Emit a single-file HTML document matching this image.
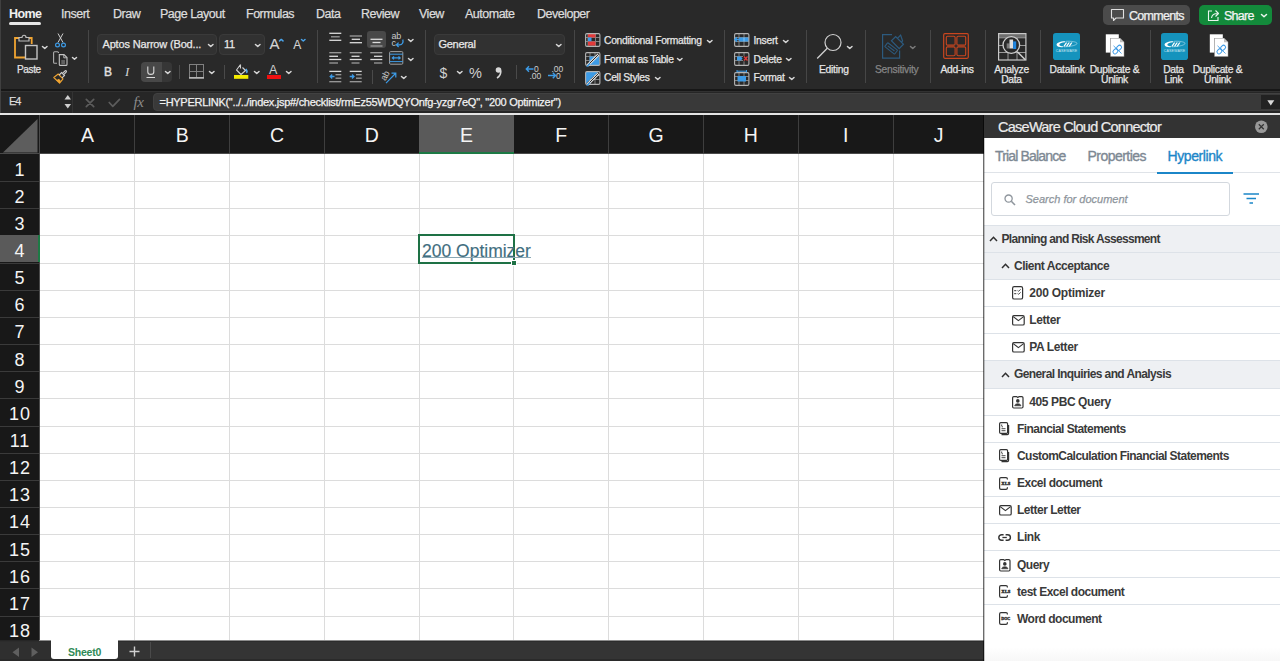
<!DOCTYPE html><html><head><meta charset="utf-8"><style>
*{box-sizing:border-box;margin:0;padding:0}
html,body{width:1280px;height:661px;overflow:hidden;background:#292929;font-family:"Liberation Sans",sans-serif}
.a{position:absolute;white-space:nowrap}
svg{position:absolute;overflow:visible}
.tab{position:absolute;top:8px;font-size:12.5px;color:#dcdcdc;letter-spacing:-0.5px;line-height:12px;-webkit-text-stroke:0.25px #dcdcdc}
.sep{position:absolute;width:1px;background:#474747}
.lbl{position:absolute;font-size:10.5px;color:#e6e6e6;letter-spacing:-0.3px;line-height:10px;text-align:center;white-space:nowrap}
.btxt{position:absolute;font-size:10.5px;color:#e6e6e6;letter-spacing:-0.3px;line-height:10px;white-space:nowrap}
.chev{position:absolute}
.ch{position:absolute;top:0;height:39px;background:#181818;color:#f4f4f4;font-size:19px;text-align:center;line-height:40px}
.rh{position:absolute;left:0;width:39px;height:27px;background:#181818;color:#f4f4f4;font-size:18px;text-align:center;line-height:29px}
.row{position:absolute;left:0;width:297px;height:27px;border-top:1px solid #e1e5ea;font-size:12px;font-weight:bold;color:#333;letter-spacing:-0.55px}
.row.g{background:#eef0f3}
.row span{position:absolute;top:7px;line-height:12px}
</style></head><body>
<div class="a" style="left:0;top:0;width:1280px;height:89px;background:#292929"></div>
<div class="tab" style="left:9px;font-weight:bold;color:#f0f0f0;letter-spacing:-0.6px;-webkit-text-stroke:0">Home</div>
<div class="tab" style="left:61px;">Insert</div>
<div class="tab" style="left:113px;">Draw</div>
<div class="tab" style="left:160px;">Page Layout</div>
<div class="tab" style="left:246px;">Formulas</div>
<div class="tab" style="left:316px;">Data</div>
<div class="tab" style="left:361px;">Review</div>
<div class="tab" style="left:419px;">View</div>
<div class="tab" style="left:465px;">Automate</div>
<div class="tab" style="left:537px;">Developer</div>
<div class="a" style="left:9px;top:22px;width:32px;height:3px;border-radius:2px;background:#e6e6e6"></div>
<div class="a" style="left:1103px;top:5px;width:87px;height:20px;border-radius:5px;background:#4b4b4b"></div>
<svg style="left:1110px;top:8px" width="15" height="14"><path d="M1.5 1.5 H13.5 V10 H6 L3.5 12.5 V10 H1.5 Z" fill="none" stroke="#e0e0e0" stroke-width="1.1" stroke-linejoin="round"/></svg>
<div class="a" style="left:1129px;top:9.5px;font-size:12.5px;line-height:12px;color:#f0f0f0;letter-spacing:-0.72px;-webkit-text-stroke:0.25px #f0f0f0">Comments</div>
<div class="a" style="left:1199px;top:5px;width:73px;height:20px;border-radius:5px;background:#138a3b"></div>
<svg style="left:1207px;top:9px" width="14" height="13"><path d="M5 2 H1.5 V11.5 H11 V8" fill="none" stroke="#eaf5ee" stroke-width="1.1"/><path d="M4.5 9 C5 5.5 7.5 4.5 10.5 4.5 M8.5 1.5 L11.5 4.5 L8.5 7.5" fill="none" stroke="#eaf5ee" stroke-width="1.1" stroke-linejoin="round"/></svg>
<div class="a" style="left:1224px;top:9.5px;font-size:12.5px;line-height:12px;color:#f4f4f4;letter-spacing:-0.75px;-webkit-text-stroke:0.25px #f4f4f4">Share</div>
<svg style="left:1260.5px;top:13.5px" width="6" height="3.3000000000000003"><path d="M0.5 0.5 L3.0 2.8000000000000003 L5.5 0.5" fill="none" stroke="#eaf5ee" stroke-width="1.5" stroke-linecap="round" stroke-linejoin="round"/></svg>
<svg style="left:13px;top:33px" width="27" height="28"><path d="M8 5 H2 V24.5 H12" fill="none" stroke="#f0a431" stroke-width="1.8"/><path d="M14 5 H18.7 V11" fill="none" stroke="#f0a431" stroke-width="1.8"/><path d="M6 8 V4.5 H9 C9 1.5 13 1.5 13 4.5 H16 V8 Z" fill="#292929" stroke="#bdbdbd" stroke-width="1.2"/><rect x="12.5" y="12.5" width="11.5" height="13.5" fill="#292929" stroke="#c4c4c4" stroke-width="1.4"/></svg>
<svg style="left:42px;top:46px" width="5.5" height="3.0250000000000004"><path d="M0.5 0.5 L2.75 2.5250000000000004 L5.0 0.5" fill="none" stroke="#d6d6d6" stroke-width="1.5" stroke-linecap="round" stroke-linejoin="round"/></svg>
<div class="a" style="left:17px;top:65px;font-size:10px;line-height:10px;letter-spacing:-0.35px;color:#e2e2e2;-webkit-text-stroke:0.25px #e2e2e2;">Paste</div>
<svg style="left:55px;top:33px" width="11" height="15"><path d="M3 9.5 L8 0.5 M8 9.5 L3 0.5" fill="none" stroke="#cfcfcf" stroke-width="1"/><circle cx="2.5" cy="12" r="1.9" fill="none" stroke="#3d9be6" stroke-width="1.2"/><circle cx="8.5" cy="12" r="1.9" fill="none" stroke="#3d9be6" stroke-width="1.2"/></svg>
<svg style="left:53px;top:51px" width="15" height="16"><path d="M5.5 2 V1.8 C5.5 1.2 5 0.7 4.4 0.7 H1.6 C1 0.7 0.6 1.2 0.6 1.8 V11.2 C0.6 11.8 1 12.3 1.6 12.3 H4" fill="none" stroke="#b0b0b0" stroke-width="1.1"/><path d="M6.3 3.6 H11 L14 6.6 V13.4 C14 14 13.6 14.4 13 14.4 H7.3 C6.7 14.4 6.3 14 6.3 13.4 Z" fill="none" stroke="#c4c4c4" stroke-width="1.1"/><path d="M10.8 3.8 V6.8 H13.8" fill="none" stroke="#c4c4c4" stroke-width="0.9"/><path d="M8.3 10 H12 M8.3 12 H12" stroke="#a8a8a8" stroke-width="0.9"/></svg>
<svg style="left:72px;top:57px" width="5" height="2.75"><path d="M0.5 0.5 L2.5 2.25 L4.5 0.5" fill="none" stroke="#d6d6d6" stroke-width="1.5" stroke-linecap="round" stroke-linejoin="round"/></svg>
<svg style="left:53px;top:70px" width="15" height="14"><path d="M0.8 7.5 L5.2 4 L10 8.8 L6.6 13.2 Z" fill="none" stroke="#f0a431" stroke-width="1.1" stroke-linejoin="round"/><path d="M3.2 10.2 L6 8.7 L7.8 11 L6.6 13.2 Z" fill="#f0a431"/><path d="M6.2 5 L8.6 2.6 L11.5 5.5 L9 7.9" fill="none" stroke="#cfcfcf" stroke-width="1.1"/><path d="M9.6 3.2 L12.3 0.8 C13 0.3 13.9 1.1 13.4 1.8 L11 4.4" fill="none" stroke="#cfcfcf" stroke-width="1.1"/></svg>
<div class="sep" style="left:88px;top:30px;height:53px;background:#464646"></div>
<div class="a" style="left:97px;top:34px;width:120px;height:21px;border-radius:4px;background:#313131;border:1px solid #3a3a3a"></div>
<div class="a" style="left:102.5px;top:39px;font-size:11px;line-height:11px;letter-spacing:-0.17px;color:#e8e8e8;-webkit-text-stroke:0.25px #e8e8e8;">Aptos Narrow (Bod...</div>
<svg style="left:208px;top:43.5px" width="5.5" height="3.0250000000000004"><path d="M0.5 0.5 L2.75 2.5250000000000004 L5.0 0.5" fill="none" stroke="#d6d6d6" stroke-width="1.5" stroke-linecap="round" stroke-linejoin="round"/></svg>
<div class="a" style="left:218.5px;top:34px;width:46px;height:21px;border-radius:4px;background:#313131;border:1px solid #3a3a3a"></div>
<div class="a" style="left:224px;top:39px;font-size:11px;line-height:11px;letter-spacing:-0.2px;color:#e8e8e8;-webkit-text-stroke:0.25px #e8e8e8;">11</div>
<svg style="left:255px;top:43.5px" width="5.5" height="3.0250000000000004"><path d="M0.5 0.5 L2.75 2.5250000000000004 L5.0 0.5" fill="none" stroke="#d6d6d6" stroke-width="1.5" stroke-linecap="round" stroke-linejoin="round"/></svg>
<div class="a" style="left:269.6px;top:36.3px;font-size:15px;line-height:15px;letter-spacing:0px;color:#d4d4d4;-webkit-text-stroke:0.1px #d4d4d4;">A</div>
<svg style="left:278.8px;top:39.3px" width="4.5" height="2.475"><path d="M0.5 0.5 L2.25 1.975 L4.0 0.5" fill="none" transform="rotate(180 2.25 1.2)" stroke="#4aa3e8" stroke-width="1.5" stroke-linecap="round" stroke-linejoin="round"/></svg>
<div class="a" style="left:293.3px;top:39px;font-size:12px;line-height:12px;letter-spacing:0px;color:#d4d4d4;-webkit-text-stroke:0.1px #d4d4d4;">A</div>
<svg style="left:300.5px;top:38.5px" width="4.5" height="2.475"><path d="M0.5 0.5 L2.25 1.975 L4.0 0.5" fill="none" stroke="#4aa3e8" stroke-width="1.5" stroke-linecap="round" stroke-linejoin="round"/></svg>
<div class="a" style="left:104px;top:66px;font-size:12px;line-height:12px;letter-spacing:0px;color:#dedede;-webkit-text-stroke:0.5px #dedede;">B</div>
<div class="a" style="left:125px;top:65px;font-family:'Liberation Serif',serif;font-style:italic;font-size:13px;line-height:13px;color:#d4d4d4">I</div>
<div class="a" style="left:141px;top:62px;width:21px;height:20px;border-radius:4px 0 0 4px;background:#484848"></div>
<div class="a" style="left:162px;top:62px;width:10px;height:20px;border-radius:0 4px 4px 0;background:#363636"></div>
<svg style="left:146px;top:66px" width="10" height="13"><path d="M1.8 0.5 V6 C1.8 9.2 7.8 9.2 7.8 6 V0.5" fill="none" stroke="#dadada" stroke-width="1.1"/><path d="M0.5 11.5 H9" stroke="#dadada" stroke-width="1"/></svg>
<svg style="left:164.5px;top:70.5px" width="5.5" height="3.0250000000000004"><path d="M0.5 0.5 L2.75 2.5250000000000004 L5.0 0.5" fill="none" stroke="#d6d6d6" stroke-width="1.5" stroke-linecap="round" stroke-linejoin="round"/></svg>
<div class="sep" style="left:179px;top:65px;height:14px;background:#4a4a4a"></div>
<svg style="left:189px;top:64px" width="15" height="15"><g fill="none" stroke="#808080" stroke-width="1"><rect x="0.5" y="0.5" width="14" height="13"/><path d="M7.5 0.5 V13 M0.5 7.5 H14.5"/></g><path d="M0 14 H15" stroke="#d8d8d8" stroke-width="1.2"/></svg>
<svg style="left:209px;top:70.5px" width="5.5" height="3.0250000000000004"><path d="M0.5 0.5 L2.75 2.5250000000000004 L5.0 0.5" fill="none" stroke="#d6d6d6" stroke-width="1.5" stroke-linecap="round" stroke-linejoin="round"/></svg>
<div class="sep" style="left:224px;top:65px;height:14px;background:#4a4a4a"></div>
<svg style="left:233px;top:63px" width="16" height="17"><path d="M7.5 1.5 L3.5 7 L8 11.5 L12.5 7.5 L9.5 4.5 M7.5 1.5 V5.5" fill="none" stroke="#d0d0d0" stroke-width="1.1" stroke-linejoin="round"/><path d="M12.8 6 C14.3 7.8 14.3 9.3 13.3 9.8" fill="none" stroke="#5aaef0" stroke-width="1.6"/><rect x="1" y="12" width="14.3" height="3.8" fill="#f4ec00"/></svg>
<svg style="left:254px;top:70.5px" width="5.5" height="3.0250000000000004"><path d="M0.5 0.5 L2.75 2.5250000000000004 L5.0 0.5" fill="none" stroke="#d6d6d6" stroke-width="1.5" stroke-linecap="round" stroke-linejoin="round"/></svg>
<div class="a" style="left:269px;top:64px;font-size:12.5px;line-height:12.5px;letter-spacing:0px;color:#d0d0d0;">A</div>
<div class="a" style="left:266.7px;top:75px;width:14.3px;height:3.8px;background:#f01010"></div>
<svg style="left:286px;top:70.5px" width="5.5" height="3.0250000000000004"><path d="M0.5 0.5 L2.75 2.5250000000000004 L5.0 0.5" fill="none" stroke="#d6d6d6" stroke-width="1.5" stroke-linecap="round" stroke-linejoin="round"/></svg>
<div class="sep" style="left:317px;top:30px;height:53px;background:#464646"></div>
<svg style="left:329px;top:31px" width="13" height="12"><path d="M0.3 2.3 H12.3" stroke="#dcdcdc" stroke-width="1.3"/><path d="M2 5.8 H10.7" stroke="#9c9c9c" stroke-width="1.3"/><path d="M0.3 9.3 H12.3" stroke="#dcdcdc" stroke-width="1.3"/></svg>
<svg style="left:349px;top:34px" width="13" height="12"><path d="M0.7 2 H13" stroke="#9c9c9c" stroke-width="1.3"/><path d="M2.7 5.3 H11" stroke="#dcdcdc" stroke-width="1.3"/><path d="M0.7 8.7 H13" stroke="#dcdcdc" stroke-width="1.3"/></svg>
<div class="a" style="left:367px;top:31px;width:18.5px;height:16.5px;border-radius:3px;background:#484848"></div>
<svg style="left:370px;top:37px" width="13" height="12"><path d="M0.5 2.3 H12.5" stroke="#dcdcdc" stroke-width="1.3"/><path d="M2.5 5.5 H10.5" stroke="#dcdcdc" stroke-width="1.3"/><path d="M0.5 9 H12.5" stroke="#9c9c9c" stroke-width="1.3"/></svg>
<div class="a" style="left:391.5px;top:32.3px;font-size:9px;line-height:9px;letter-spacing:-0.3px;color:#c8c8c8;">ab</div>
<div class="a" style="left:391.5px;top:38.5px;font-size:9px;line-height:9px;letter-spacing:0px;color:#c8c8c8;">c</div>
<svg style="left:395px;top:38px" width="10" height="10"><path d="M7.8 1.5 C8.5 4.5 7.5 6.8 4.5 6.8 H1.6 M3.6 4.6 L1.4 6.8 L3.6 9" fill="none" stroke="#3d9be6" stroke-width="1.3"/></svg>
<svg style="left:408px;top:39px" width="5.5" height="3.0250000000000004"><path d="M0.5 0.5 L2.75 2.5250000000000004 L5.0 0.5" fill="none" stroke="#d6d6d6" stroke-width="1.5" stroke-linecap="round" stroke-linejoin="round"/></svg>
<svg style="left:329px;top:51px" width="13" height="14"><path d="M0.3 1.7 H12.3" stroke="#9c9c9c" stroke-width="1.3"/><path d="M0.3 5.3 H9" stroke="#dcdcdc" stroke-width="1.3"/><path d="M0.3 8.5 H12.3" stroke="#dcdcdc" stroke-width="1.3"/><path d="M0.3 12 H9" stroke="#9c9c9c" stroke-width="1.3"/></svg>
<svg style="left:349px;top:51px" width="13" height="14"><path d="M0.7 1.7 H12.7" stroke="#9c9c9c" stroke-width="1.3"/><path d="M2.5 5.3 H10.5" stroke="#dcdcdc" stroke-width="1.3"/><path d="M0.7 8.5 H12.7" stroke="#dcdcdc" stroke-width="1.3"/><path d="M2.5 12 H10.5" stroke="#9c9c9c" stroke-width="1.3"/></svg>
<svg style="left:369.5px;top:51px" width="13" height="14"><path d="M0.3 1.7 H12.3" stroke="#9c9c9c" stroke-width="1.3"/><path d="M4 5.3 H12.3" stroke="#dcdcdc" stroke-width="1.3"/><path d="M0.3 8.5 H12.3" stroke="#dcdcdc" stroke-width="1.3"/><path d="M4 12 H12.3" stroke="#9c9c9c" stroke-width="1.3"/></svg>
<svg style="left:389px;top:51px" width="15" height="14"><rect x="0.6" y="0.6" width="13.2" height="12.6" rx="1" fill="none" stroke="#a0a0a0" stroke-width="1"/><path d="M0.6 3.2 H13.8 M0.6 10.6 H13.8" stroke="#3d9be6" stroke-width="1"/><path d="M3.5 6.9 H11 M5 5.4 L3.3 6.9 L5 8.4 M9.5 5.4 L11.2 6.9 L9.5 8.4" fill="none" stroke="#3d9be6" stroke-width="1.2"/></svg>
<svg style="left:408px;top:57.5px" width="5.5" height="3.0250000000000004"><path d="M0.5 0.5 L2.75 2.5250000000000004 L5.0 0.5" fill="none" stroke="#d6d6d6" stroke-width="1.5" stroke-linecap="round" stroke-linejoin="round"/></svg>
<svg style="left:329px;top:70px" width="13" height="14"><path d="M0.3 1.4 H12.3" stroke="#dcdcdc" stroke-width="1.3"/><path d="M6.5 4.7 H12.3" stroke="#9c9c9c" stroke-width="1.3"/><path d="M6.5 8.2 H12.3" stroke="#9c9c9c" stroke-width="1.3"/><path d="M0.3 11.7 H12.3" stroke="#9c9c9c" stroke-width="1.3"/><path d="M5.5 6.5 H1.2 M3.2 4.5 L1.2 6.5 L3.2 8.5" fill="none" stroke="#3d9be6" stroke-width="1.3"/></svg>
<svg style="left:349px;top:70px" width="13" height="14"><path d="M0.7 1.4 H12.7" stroke="#dcdcdc" stroke-width="1.3"/><path d="M7 4.7 H12.7" stroke="#9c9c9c" stroke-width="1.3"/><path d="M7 8.2 H12.7" stroke="#9c9c9c" stroke-width="1.3"/><path d="M0.7 11.7 H12.7" stroke="#9c9c9c" stroke-width="1.3"/><path d="M0.7 6.5 H5 M3 4.5 L5 6.5 L3 8.5" fill="none" stroke="#3d9be6" stroke-width="1.3"/></svg>
<div class="sep" style="left:372px;top:70px;height:14px;background:#4a4a4a"></div>
<div class="a" style="left:381px;top:70.5px;font-size:9px;line-height:9px;color:#c8c8c8;letter-spacing:-0.3px;transform:rotate(-60deg);transform-origin:5px 5px">ab</div>
<svg style="left:385px;top:72px" width="12" height="12"><path d="M1 11.2 L10.5 1.5 M6.5 1.2 H10.8 V5.5" fill="none" stroke="#3d9be6" stroke-width="1.2"/></svg>
<svg style="left:401px;top:76px" width="5.5" height="3.0250000000000004"><path d="M0.5 0.5 L2.75 2.5250000000000004 L5.0 0.5" fill="none" stroke="#d6d6d6" stroke-width="1.5" stroke-linecap="round" stroke-linejoin="round"/></svg>
<div class="sep" style="left:425px;top:30px;height:53px;background:#464646"></div>
<div class="a" style="left:434px;top:34px;width:131px;height:21px;border-radius:4px;background:#313131;border:1px solid #3a3a3a"></div>
<div class="a" style="left:438.5px;top:39px;font-size:11px;line-height:11px;letter-spacing:-0.3px;color:#e8e8e8;-webkit-text-stroke:0.25px #e8e8e8;">General</div>
<svg style="left:556px;top:43.5px" width="5.5" height="3.0250000000000004"><path d="M0.5 0.5 L2.75 2.5250000000000004 L5.0 0.5" fill="none" stroke="#d6d6d6" stroke-width="1.5" stroke-linecap="round" stroke-linejoin="round"/></svg>
<div class="a" style="left:439.5px;top:65.5px;font-size:14px;line-height:14px;letter-spacing:0px;color:#d0d0d0;">$</div>
<svg style="left:456.5px;top:70.5px" width="5.5" height="3.0250000000000004"><path d="M0.5 0.5 L2.75 2.5250000000000004 L5.0 0.5" fill="none" stroke="#d6d6d6" stroke-width="1.5" stroke-linecap="round" stroke-linejoin="round"/></svg>
<div class="a" style="left:469px;top:65.5px;font-size:14.5px;line-height:14.5px;letter-spacing:0px;color:#d0d0d0;">%</div>
<svg style="left:494px;top:66px" width="9" height="13"><circle cx="4.5" cy="4" r="2.8" fill="#d8d8d8"/><path d="M6.8 4.5 C7 8 5.5 10.5 3 12" fill="none" stroke="#d8d8d8" stroke-width="1.6"/></svg>
<div class="sep" style="left:515.5px;top:65px;height:14px;background:#4a4a4a"></div>
<svg style="left:525px;top:65px" width="16" height="15"><text x="9" y="7" font-family="Liberation Sans" font-size="8.5" fill="#cfcfcf">0</text><text x="4.5" y="14" font-family="Liberation Sans" font-size="8.5" fill="#cfcfcf">.00</text><path d="M8.5 4 H1.3 M4 1.3 L1.3 4 L4 6.7" fill="none" stroke="#3d9be6" stroke-width="1.4"/></svg>
<svg style="left:547px;top:65px" width="16" height="15"><text x="4.5" y="7" font-family="Liberation Sans" font-size="8.5" fill="#cfcfcf">.00</text><text x="9" y="14" font-family="Liberation Sans" font-size="8.5" fill="#cfcfcf">0</text><path d="M1 10.5 H8.5 M5.8 7.8 L8.5 10.5 L5.8 13.2" fill="none" stroke="#3d9be6" stroke-width="1.4"/></svg>
<div class="sep" style="left:573.5px;top:30px;height:53px;background:#464646"></div>
<svg style="left:584.5px;top:33px" width="16" height="15"><path d="M3 0.8 V13.2 M10.5 0.8 V13.2 M0.8 4.5 H14.7 M0.8 8.5 H14.7" stroke="#8c8c8c" stroke-width="0.9"/><rect x="3" y="1" width="7.5" height="3.5" fill="#e23a3a"/><rect x="3" y="4.5" width="3.5" height="4" fill="#3d9be6"/><rect x="3" y="8.5" width="7.5" height="4.2" fill="#e23a3a"/><rect x="0.6" y="0.6" width="14.3" height="12.8" rx="1.3" fill="none" stroke="#b4b4b4" stroke-width="1.1"/></svg>
<div class="a" style="left:604px;top:35.5px;font-size:10.3px;line-height:10.3px;letter-spacing:-0.27px;color:#e6e6e6;-webkit-text-stroke:0.25px #e6e6e6;">Conditional Formatting</div>
<svg style="left:707px;top:39.5px" width="5.5" height="3.0250000000000004"><path d="M0.5 0.5 L2.75 2.5250000000000004 L5.0 0.5" fill="none" stroke="#d6d6d6" stroke-width="1.5" stroke-linecap="round" stroke-linejoin="round"/></svg>
<svg style="left:584.5px;top:52px" width="16" height="15"><path d="M5 0.8 V13.2 M10 0.8 V13.2 M0.8 4.5 H14.7 M0.8 8.5 H14.7" stroke="#8c8c8c" stroke-width="0.9"/><rect x="4.5" y="4.5" width="10" height="8.5" fill="#3d9be6"/><rect x="0.6" y="0.6" width="14.3" height="12.8" rx="1.3" fill="none" stroke="#b4b4b4" stroke-width="1.1"/><path d="M2.5 13.5 L13.5 2.5" stroke="#dadada" stroke-width="2.6"/><path d="M2.5 13.5 L13.5 2.5" stroke="#2a2a2a" stroke-width="1"/><path d="M1 14.5 L4.5 11 L5.5 12 L3 14.8 Z" fill="#3d9be6"/></svg>
<div class="a" style="left:604px;top:54.5px;font-size:10.3px;line-height:10.3px;letter-spacing:-0.27px;color:#e6e6e6;-webkit-text-stroke:0.25px #e6e6e6;">Format as Table</div>
<svg style="left:677px;top:58px" width="5.5" height="3.0250000000000004"><path d="M0.5 0.5 L2.75 2.5250000000000004 L5.0 0.5" fill="none" stroke="#d6d6d6" stroke-width="1.5" stroke-linecap="round" stroke-linejoin="round"/></svg>
<svg style="left:584.5px;top:70.5px" width="16" height="15"><path d="M5 0.8 V13.2 M10 0.8 V13.2 M0.8 4.5 H14.7 M0.8 8.5 H14.7" stroke="#8c8c8c" stroke-width="0.9"/><path d="M1 1 H13 L1 12.5 Z" fill="#3d9be6"/><rect x="0.6" y="0.6" width="14.3" height="12.8" rx="1.3" fill="none" stroke="#b4b4b4" stroke-width="1.1"/><path d="M2.5 13.5 L13.5 2.5" stroke="#dadada" stroke-width="2.6"/><path d="M2.5 13.5 L13.5 2.5" stroke="#2a2a2a" stroke-width="1"/><path d="M1 14.5 L4.5 11 L5.5 12 L3 14.8 Z" fill="#3d9be6"/></svg>
<div class="a" style="left:604px;top:73px;font-size:10.3px;line-height:10.3px;letter-spacing:-0.27px;color:#e6e6e6;-webkit-text-stroke:0.25px #e6e6e6;">Cell Styles</div>
<svg style="left:654.5px;top:76.5px" width="5.5" height="3.0250000000000004"><path d="M0.5 0.5 L2.75 2.5250000000000004 L5.0 0.5" fill="none" stroke="#d6d6d6" stroke-width="1.5" stroke-linecap="round" stroke-linejoin="round"/></svg>
<div class="sep" style="left:723.5px;top:30px;height:53px;background:#464646"></div>
<svg style="left:734px;top:33px" width="16" height="15"><path d="M5 0.8 V13.2 M10 0.8 V13.2 M0.8 4.5 H14.7 M0.8 8.5 H14.7" stroke="#8c8c8c" stroke-width="0.9"/><rect x="5" y="4.5" width="9.8" height="4" fill="#3d9be6"/><path d="M10 4.5 V8.5" stroke="#9fd0f5" stroke-width="0.8"/><rect x="0.6" y="0.6" width="14.3" height="12.8" rx="1.3" fill="none" stroke="#b4b4b4" stroke-width="1.1"/><path d="M5.5 6.5 H0.8 M3 4.3 L0.8 6.5 L3 8.7" fill="none" stroke="#3d9be6" stroke-width="1.3"/></svg>
<div class="a" style="left:753.5px;top:35.5px;font-size:10.3px;line-height:10.3px;letter-spacing:-0.27px;color:#e6e6e6;-webkit-text-stroke:0.25px #e6e6e6;">Insert</div>
<svg style="left:783px;top:39.5px" width="5.5" height="3.0250000000000004"><path d="M0.5 0.5 L2.75 2.5250000000000004 L5.0 0.5" fill="none" stroke="#d6d6d6" stroke-width="1.5" stroke-linecap="round" stroke-linejoin="round"/></svg>
<svg style="left:734px;top:52px" width="16" height="15"><path d="M5 0.8 V13.2 M10 0.8 V13.2 M0.8 4.5 H14.7 M0.8 8.5 H14.7" stroke="#8c8c8c" stroke-width="0.9"/><rect x="3" y="4.5" width="4" height="4" fill="#3d9be6"/><path d="M7 4.5 L8.5 6.5 L7 8.5 Z" fill="#3d9be6"/><rect x="9" y="3.8" width="6.5" height="5.5" fill="#292929"/><rect x="0.6" y="0.6" width="14.3" height="12.8" rx="1.3" fill="none" stroke="#b4b4b4" stroke-width="1.1"/><path d="M10 4.5 L13.5 8.5 M13.5 4.5 L10 8.5" stroke="#e23a3a" stroke-width="1.3"/></svg>
<div class="a" style="left:753.5px;top:54.5px;font-size:10.3px;line-height:10.3px;letter-spacing:-0.27px;color:#e6e6e6;-webkit-text-stroke:0.25px #e6e6e6;">Delete</div>
<svg style="left:786px;top:58px" width="5.5" height="3.0250000000000004"><path d="M0.5 0.5 L2.75 2.5250000000000004 L5.0 0.5" fill="none" stroke="#d6d6d6" stroke-width="1.5" stroke-linecap="round" stroke-linejoin="round"/></svg>
<svg style="left:734px;top:72px" width="16" height="15"><path d="M5 0.8 V13.2 M10 0.8 V13.2 M0.8 4.5 H14.7 M0.8 8.5 H14.7" stroke="#8c8c8c" stroke-width="0.9"/><rect x="3.5" y="4" width="8.5" height="5.5" fill="#3d9be6"/><rect x="0.6" y="0.6" width="14.3" height="12.8" rx="1.3" fill="none" stroke="#b4b4b4" stroke-width="1.1"/><path d="M3 -0.8 H12.5 M3 -2 V0.4 M12.5 -2 V0.4" stroke="#3d9be6" stroke-width="1"/></svg>
<div class="a" style="left:753.5px;top:73px;font-size:10.3px;line-height:10.3px;letter-spacing:-0.27px;color:#e6e6e6;-webkit-text-stroke:0.25px #e6e6e6;">Format</div>
<svg style="left:788.5px;top:76.5px" width="5.5" height="3.0250000000000004"><path d="M0.5 0.5 L2.75 2.5250000000000004 L5.0 0.5" fill="none" stroke="#d6d6d6" stroke-width="1.5" stroke-linecap="round" stroke-linejoin="round"/></svg>
<div class="sep" style="left:806px;top:30px;height:53px;background:#464646"></div>
<svg style="left:816px;top:33px" width="27" height="27"><circle cx="17" cy="9.5" r="8" fill="none" stroke="#d0d0d0" stroke-width="1.2"/><path d="M11.3 15.2 L1.2 25.5" stroke="#d0d0d0" stroke-width="1.3"/></svg>
<svg style="left:847px;top:45.5px" width="5.5" height="3.0250000000000004"><path d="M0.5 0.5 L2.75 2.5250000000000004 L5.0 0.5" fill="none" stroke="#d6d6d6" stroke-width="1.5" stroke-linecap="round" stroke-linejoin="round"/></svg>
<div class="a" style="left:819px;top:65px;font-size:10.3px;line-height:10.3px;letter-spacing:-0.27px;color:#e6e6e6;-webkit-text-stroke:0.25px #e6e6e6;">Editing</div>
<div class="sep" style="left:864.5px;top:30px;height:53px;background:#464646"></div>
<svg style="left:881px;top:33px" width="26" height="27"><path d="M11 1.6 H1.6 V25.2 H18.6 V17.5" fill="none" stroke="#2c5a7e" stroke-width="1.2"/><g transform="rotate(38 10.3 15.3)" fill="none" stroke="#2c5a7e" stroke-width="1.1"><rect x="4" y="13" width="12.5" height="5" rx="0.6"/><path d="M6 15.5 H14.5"/></g><g transform="rotate(45 17.5 8.5)" fill="none" stroke="#2c5a7e" stroke-width="1.2"><rect x="12" y="7" width="11" height="6"/><path d="M14.5 7 V2.5 L20 5.2 V7"/></g></svg>
<svg style="left:910px;top:45.5px" width="5.5" height="3.0250000000000004"><path d="M0.5 0.5 L2.75 2.5250000000000004 L5.0 0.5" fill="none" stroke="#7a7a7a" stroke-width="1.5" stroke-linecap="round" stroke-linejoin="round"/></svg>
<div class="a" style="left:875px;top:65px;font-size:10.3px;line-height:10.3px;letter-spacing:-0.27px;color:#858585;-webkit-text-stroke:0.25px #858585;">Sensitivity</div>
<div class="sep" style="left:929.5px;top:30px;height:53px;background:#464646"></div>
<svg style="left:943px;top:33px" width="27" height="27"><rect x="0.7" y="0.7" width="24.6" height="24.6" rx="1.2" fill="none" stroke="#c9461f" stroke-width="1.2"/><g fill="none" stroke="#c9461f" stroke-width="1.1"><rect x="3.3" y="3.3" width="8.8" height="8.8" rx="1.2"/><rect x="13.9" y="3.3" width="8.8" height="8.8" rx="1.2"/><rect x="3.3" y="13.9" width="8.8" height="8.8" rx="1.2"/><rect x="13.9" y="13.9" width="8.8" height="8.8" rx="1.2"/></g></svg>
<div class="a" style="left:940.5px;top:65px;font-size:10.3px;line-height:10.3px;letter-spacing:-0.27px;color:#e6e6e6;-webkit-text-stroke:0.25px #e6e6e6;">Add-ins</div>
<div class="sep" style="left:985px;top:30px;height:53px;background:#464646"></div>
<svg style="left:997.5px;top:32.5px" width="29" height="28"><rect x="1" y="1" width="26.5" height="3.6" fill="#6e6e6e"/><path d="M0.6 4.8 H27.9 M0.6 12.5 H27.9 M0.6 19.5 H27.9 M10 4.8 V27 M19 4.8 V27" stroke="#9a9a9a" stroke-width="1"/><rect x="0.6" y="0.6" width="27.3" height="26.4" fill="none" stroke="#c8c8c8" stroke-width="1.2"/><circle cx="13.3" cy="12" r="8.3" fill="#292929" stroke="#d0d0d0" stroke-width="1.3"/><rect x="8.7" y="10.4" width="2.8" height="5.1" fill="#7a7a7a"/><rect x="11.5" y="6.5" width="3.6" height="9" fill="#dedede"/><rect x="15.1" y="8.4" width="3.1" height="7.6" fill="#1f86e0"/><path d="M19.3 18.7 L27.3 26.7" stroke="#d0d0d0" stroke-width="1.5"/></svg>
<div class="a" style="left:951.5px;width:120px;text-align:center;top:65px;font-size:10.3px;line-height:10.3px;letter-spacing:-0.27px;color:#e6e6e6;-webkit-text-stroke:0.25px #e6e6e6">Analyze</div>
<div class="a" style="left:951.5px;width:120px;text-align:center;top:74.5px;font-size:10.3px;line-height:10.3px;letter-spacing:-0.27px;color:#e6e6e6;-webkit-text-stroke:0.25px #e6e6e6">Data</div>
<div class="sep" style="left:1039.5px;top:30px;height:53px;background:#464646"></div>
<svg style="left:1053px;top:33px" width="27" height="27"><rect x="0" y="0" width="27" height="27" rx="2.8" fill="#1593bd"/><path d="M12.5 8.2 C6.5 8.2 3.3 10 3.6 12 C3.9 13.6 6.5 14.3 9.5 14.2 L10.3 13.2 C7.8 13.2 6.2 12.6 6.3 11.7 C6.5 10.3 9 9.4 12 9.3 Z" fill="#ffffff"/><path d="M10.2 13.4 L12.8 9.6 H14.3 L11.7 13.4 Z M12.8 13.4 L15.4 9.6 H16.9 L14.3 13.4 Z M15.4 13.4 L18 9.6 H19.5 L16.9 13.4 Z" fill="#ffffff"/><path d="M13 8.3 C18 8 23.5 8.8 24 10.2 C24.4 11.8 19 13.6 11 13.8" fill="none" stroke="#d8eef6" stroke-width="0.5"/><text x="13.5" y="18.6" text-anchor="middle" font-family="Liberation Sans" font-size="3.6" fill="#cfe9f3" letter-spacing="0.15">CASEWARE</text></svg>
<div class="a" style="left:1007px;width:120px;text-align:center;top:65px;font-size:10.3px;line-height:10.3px;letter-spacing:-0.27px;color:#e6e6e6;-webkit-text-stroke:0.25px #e6e6e6">Datalink</div>
<svg style="left:1104px;top:33px" width="21" height="24"><rect x="1.8" y="1.3" width="13" height="18.3" fill="#ffffff"/><path d="M6.2 5 H16.3 L20.3 9 V23.8 H6.2 Z" fill="#8a8a8a"/><path d="M6.8 5.5 H16 L19.8 9.3 V23.3 H6.8 Z" fill="#ffffff"/><path d="M16 5.5 V9.3 H19.8 Z" fill="#bdbdbd"/><g transform="rotate(-45 13.3 16.5)" fill="none" stroke="#3d9be6" stroke-width="1"><rect x="8" y="14.5" width="5.5" height="4" rx="2"/><rect x="13" y="14.5" width="5.5" height="4" rx="2"/></g><path d="M9.5 12.8 L17.5 20.5" stroke="#3d9be6" stroke-width="0.9"/></svg>
<div class="a" style="left:1054.5px;width:120px;text-align:center;top:65px;font-size:10.3px;line-height:10.3px;letter-spacing:-0.27px;color:#e6e6e6;-webkit-text-stroke:0.25px #e6e6e6">Duplicate &amp;</div>
<div class="a" style="left:1054.5px;width:120px;text-align:center;top:74.5px;font-size:10.3px;line-height:10.3px;letter-spacing:-0.27px;color:#e6e6e6;-webkit-text-stroke:0.25px #e6e6e6">Unlink</div>
<div class="sep" style="left:1150px;top:30px;height:53px;background:#464646"></div>
<svg style="left:1161px;top:33px" width="27" height="27"><rect x="0" y="0" width="27" height="27" rx="2.8" fill="#1593bd"/><path d="M12.5 8.2 C6.5 8.2 3.3 10 3.6 12 C3.9 13.6 6.5 14.3 9.5 14.2 L10.3 13.2 C7.8 13.2 6.2 12.6 6.3 11.7 C6.5 10.3 9 9.4 12 9.3 Z" fill="#ffffff"/><path d="M10.2 13.4 L12.8 9.6 H14.3 L11.7 13.4 Z M12.8 13.4 L15.4 9.6 H16.9 L14.3 13.4 Z M15.4 13.4 L18 9.6 H19.5 L16.9 13.4 Z" fill="#ffffff"/><path d="M13 8.3 C18 8 23.5 8.8 24 10.2 C24.4 11.8 19 13.6 11 13.8" fill="none" stroke="#d8eef6" stroke-width="0.5"/><text x="13.5" y="18.6" text-anchor="middle" font-family="Liberation Sans" font-size="3.6" fill="#cfe9f3" letter-spacing="0.15">CASEWARE</text></svg>
<div class="a" style="left:1113.5px;width:120px;text-align:center;top:65px;font-size:10.3px;line-height:10.3px;letter-spacing:-0.27px;color:#e6e6e6;-webkit-text-stroke:0.25px #e6e6e6">Data</div>
<div class="a" style="left:1113.5px;width:120px;text-align:center;top:74.5px;font-size:10.3px;line-height:10.3px;letter-spacing:-0.27px;color:#e6e6e6;-webkit-text-stroke:0.25px #e6e6e6">Link</div>
<svg style="left:1208px;top:33px" width="21" height="24"><rect x="1.8" y="1.3" width="13" height="18.3" fill="#ffffff"/><path d="M6.2 5 H16.3 L20.3 9 V23.8 H6.2 Z" fill="#8a8a8a"/><path d="M6.8 5.5 H16 L19.8 9.3 V23.3 H6.8 Z" fill="#ffffff"/><path d="M16 5.5 V9.3 H19.8 Z" fill="#bdbdbd"/><g transform="rotate(-45 13.3 16.5)" fill="none" stroke="#3d9be6" stroke-width="1"><rect x="8" y="14.5" width="5.5" height="4" rx="2"/><rect x="13" y="14.5" width="5.5" height="4" rx="2"/></g><path d="M9.5 12.8 L17.5 20.5" stroke="#3d9be6" stroke-width="0.9"/></svg>
<div class="a" style="left:1157.5px;width:120px;text-align:center;top:65px;font-size:10.3px;line-height:10.3px;letter-spacing:-0.27px;color:#e6e6e6;-webkit-text-stroke:0.25px #e6e6e6">Duplicate &amp;</div>
<div class="a" style="left:1157.5px;width:120px;text-align:center;top:74.5px;font-size:10.3px;line-height:10.3px;letter-spacing:-0.27px;color:#e6e6e6;-webkit-text-stroke:0.25px #e6e6e6">Unlink</div>
<div class="a" style="left:0;top:89px;width:1280px;height:2px;background:#171717"></div>
<div class="a" style="left:0;top:91px;width:1280px;height:22px;background:#262626"></div>
<div class="a" style="left:0;top:91px;width:1280px;height:1px;background:#313131"></div>
<div class="a" style="left:72px;top:92px;width:1px;height:21px;background:#333333"></div>
<div class="a" style="left:0;top:0;width:1px;height:113px;background:#404040"></div>
<div class="a" style="left:9px;top:95.5px;font-size:11px;line-height:11px;letter-spacing:-1px;color:#dcdcdc;-webkit-text-stroke:0.25px #dcdcdc;">E4</div>
<svg style="left:64px;top:94px" width="8" height="16"><path d="M0.5 5.5 L3.8 1 L7 5.5 Z" fill="#cfcfcf"/><path d="M0.5 10 L3.8 14.5 L7 10 Z" fill="#cfcfcf"/></svg>
<svg style="left:84.5px;top:98px" width="10" height="10"><path d="M1.3 1.3 L8.7 8.7 M8.7 1.3 L1.3 8.7" stroke="#5c5c5c" stroke-width="1.7" stroke-linecap="round"/></svg>
<svg style="left:108px;top:98px" width="13" height="10"><path d="M1.2 4.5 L4.8 8.3 L11.5 1.3" fill="none" stroke="#5c5c5c" stroke-width="1.7" stroke-linecap="round" stroke-linejoin="round"/></svg>
<div class="a" style="left:133.5px;top:95px;font-family:'Liberation Serif',serif;font-style:italic;font-size:15px;line-height:15px;color:#8c8c8c;letter-spacing:-0.3px">fx</div>
<div class="a" style="left:153px;top:93px;width:1128px;height:17.5px;border-radius:4px 0 0 4px;background:#393939;border:1px solid #414141"></div>
<div class="a" style="left:159.5px;top:96.5px;font-size:11px;line-height:11px;letter-spacing:-0.28px;color:#f2f2f2;-webkit-text-stroke:0.25px #f2f2f2;">=HYPERLINK("../../index.jsp#/checklist/rmEz55WDQYOnfg-yzgr7eQ", "200 Optimizer")</div>
<div class="a" style="left:1261px;top:94.5px;width:19px;height:14.5px;background:#222222"></div>
<svg style="left:1267px;top:99.5px" width="8" height="6"><path d="M0.3 0.3 H7.3 L3.8 5.5 Z" fill="#d8d8d8"/></svg>
<div class="a" style="left:0;top:113px;width:1280px;height:2px;background:#e4e4e4"></div>
<div class="a" style="left:0;top:115px;width:984px;height:525px;background:#ffffff"></div>
<div class="a" style="left:0;top:115px;width:984px;height:39px;background:#181818"></div>
<div class="a" style="left:0;top:115px;width:39px;height:525px;background:#181818"></div>
<svg style="left:1px;top:116px" width="38" height="38"><path d="M2 36.5 L36.5 36.5 L36.5 3 Z" fill="#5d5d5d"/></svg>
<div class="a" style="left:134px;top:154px;width:1px;height:486px;background:#dcdcdc"></div>
<div class="a" style="left:134px;top:115px;width:1px;height:39px;background:#3e3e3e"></div>
<div class="a" style="left:229px;top:154px;width:1px;height:486px;background:#dcdcdc"></div>
<div class="a" style="left:229px;top:115px;width:1px;height:39px;background:#3e3e3e"></div>
<div class="a" style="left:324px;top:154px;width:1px;height:486px;background:#dcdcdc"></div>
<div class="a" style="left:324px;top:115px;width:1px;height:39px;background:#3e3e3e"></div>
<div class="a" style="left:419px;top:154px;width:1px;height:486px;background:#dcdcdc"></div>
<div class="a" style="left:419px;top:115px;width:1px;height:39px;background:#3e3e3e"></div>
<div class="a" style="left:513px;top:154px;width:1px;height:486px;background:#dcdcdc"></div>
<div class="a" style="left:513px;top:115px;width:1px;height:39px;background:#3e3e3e"></div>
<div class="a" style="left:608px;top:154px;width:1px;height:486px;background:#dcdcdc"></div>
<div class="a" style="left:608px;top:115px;width:1px;height:39px;background:#3e3e3e"></div>
<div class="a" style="left:703px;top:154px;width:1px;height:486px;background:#dcdcdc"></div>
<div class="a" style="left:703px;top:115px;width:1px;height:39px;background:#3e3e3e"></div>
<div class="a" style="left:798px;top:154px;width:1px;height:486px;background:#dcdcdc"></div>
<div class="a" style="left:798px;top:115px;width:1px;height:39px;background:#3e3e3e"></div>
<div class="a" style="left:893px;top:154px;width:1px;height:486px;background:#dcdcdc"></div>
<div class="a" style="left:893px;top:115px;width:1px;height:39px;background:#3e3e3e"></div>
<div class="a" style="left:39px;top:115px;width:1px;height:525px;background:#4a4a4a"></div>
<div class="a" style="left:0;top:153px;width:984px;height:1px;background:#4a4a4a"></div>
<div class="a" style="left:40px;top:181px;width:944px;height:1px;background:#dcdcdc"></div>
<div class="a" style="left:0;top:181px;width:39px;height:1px;background:#3a3a3a"></div>
<div class="a" style="left:40px;top:208px;width:944px;height:1px;background:#dcdcdc"></div>
<div class="a" style="left:0;top:208px;width:39px;height:1px;background:#3a3a3a"></div>
<div class="a" style="left:40px;top:235px;width:944px;height:1px;background:#dcdcdc"></div>
<div class="a" style="left:0;top:235px;width:39px;height:1px;background:#3a3a3a"></div>
<div class="a" style="left:40px;top:263px;width:944px;height:1px;background:#dcdcdc"></div>
<div class="a" style="left:0;top:263px;width:39px;height:1px;background:#3a3a3a"></div>
<div class="a" style="left:40px;top:290px;width:944px;height:1px;background:#dcdcdc"></div>
<div class="a" style="left:0;top:290px;width:39px;height:1px;background:#3a3a3a"></div>
<div class="a" style="left:40px;top:317px;width:944px;height:1px;background:#dcdcdc"></div>
<div class="a" style="left:0;top:317px;width:39px;height:1px;background:#3a3a3a"></div>
<div class="a" style="left:40px;top:344px;width:944px;height:1px;background:#dcdcdc"></div>
<div class="a" style="left:0;top:344px;width:39px;height:1px;background:#3a3a3a"></div>
<div class="a" style="left:40px;top:371px;width:944px;height:1px;background:#dcdcdc"></div>
<div class="a" style="left:0;top:371px;width:39px;height:1px;background:#3a3a3a"></div>
<div class="a" style="left:40px;top:398px;width:944px;height:1px;background:#dcdcdc"></div>
<div class="a" style="left:0;top:398px;width:39px;height:1px;background:#3a3a3a"></div>
<div class="a" style="left:40px;top:426px;width:944px;height:1px;background:#dcdcdc"></div>
<div class="a" style="left:0;top:426px;width:39px;height:1px;background:#3a3a3a"></div>
<div class="a" style="left:40px;top:453px;width:944px;height:1px;background:#dcdcdc"></div>
<div class="a" style="left:0;top:453px;width:39px;height:1px;background:#3a3a3a"></div>
<div class="a" style="left:40px;top:480px;width:944px;height:1px;background:#dcdcdc"></div>
<div class="a" style="left:0;top:480px;width:39px;height:1px;background:#3a3a3a"></div>
<div class="a" style="left:40px;top:507px;width:944px;height:1px;background:#dcdcdc"></div>
<div class="a" style="left:0;top:507px;width:39px;height:1px;background:#3a3a3a"></div>
<div class="a" style="left:40px;top:534px;width:944px;height:1px;background:#dcdcdc"></div>
<div class="a" style="left:0;top:534px;width:39px;height:1px;background:#3a3a3a"></div>
<div class="a" style="left:40px;top:561px;width:944px;height:1px;background:#dcdcdc"></div>
<div class="a" style="left:0;top:561px;width:39px;height:1px;background:#3a3a3a"></div>
<div class="a" style="left:40px;top:588px;width:944px;height:1px;background:#dcdcdc"></div>
<div class="a" style="left:0;top:588px;width:39px;height:1px;background:#3a3a3a"></div>
<div class="a" style="left:40px;top:616px;width:944px;height:1px;background:#dcdcdc"></div>
<div class="a" style="left:0;top:616px;width:39px;height:1px;background:#3a3a3a"></div>
<div class="a" style="left:0;top:235px;width:39px;height:27px;background:#5a5a5a"></div>
<div class="a" style="left:38px;top:235px;width:2px;height:27px;background:#1d7a45"></div>
<div class="a" style="left:419px;top:115px;width:95px;height:39px;background:#5a5a5a"></div>
<div class="a" style="left:419px;top:152px;width:95px;height:2px;background:#1d7a45"></div>
<div class="a" style="left:40.0px;width:94.78px;text-align:center;top:128px;font-size:19.5px;line-height:14px;color:#f4f4f4">A</div>
<div class="a" style="left:134.78px;width:94.78px;text-align:center;top:128px;font-size:19.5px;line-height:14px;color:#f4f4f4">B</div>
<div class="a" style="left:229.56px;width:94.78000000000003px;text-align:center;top:128px;font-size:19.5px;line-height:14px;color:#f4f4f4">C</div>
<div class="a" style="left:324.34000000000003px;width:94.77999999999997px;text-align:center;top:128px;font-size:19.5px;line-height:14px;color:#f4f4f4">D</div>
<div class="a" style="left:419.12px;width:94.77999999999997px;text-align:center;top:128px;font-size:19.5px;line-height:14px;color:#f4f4f4">E</div>
<div class="a" style="left:513.9px;width:94.78000000000009px;text-align:center;top:128px;font-size:19.5px;line-height:14px;color:#f4f4f4">F</div>
<div class="a" style="left:608.6800000000001px;width:94.77999999999997px;text-align:center;top:128px;font-size:19.5px;line-height:14px;color:#f4f4f4">G</div>
<div class="a" style="left:703.46px;width:94.77999999999997px;text-align:center;top:128px;font-size:19.5px;line-height:14px;color:#f4f4f4">H</div>
<div class="a" style="left:798.24px;width:94.77999999999997px;text-align:center;top:128px;font-size:19.5px;line-height:14px;color:#f4f4f4">I</div>
<div class="a" style="left:893.02px;width:90.98000000000002px;text-align:center;top:128px;font-size:19.5px;line-height:14px;color:#f4f4f4">J</div>
<div class="a" style="left:0;width:39px;text-align:center;top:163.5px;font-size:18px;line-height:13px;letter-spacing:0;text-indent:0;color:#f4f4f4">1</div>
<div class="a" style="left:0;width:39px;text-align:center;top:190.65px;font-size:18px;line-height:13px;letter-spacing:0;text-indent:0;color:#f4f4f4">2</div>
<div class="a" style="left:0;width:39px;text-align:center;top:217.8px;font-size:18px;line-height:13px;letter-spacing:0;text-indent:0;color:#f4f4f4">3</div>
<div class="a" style="left:0;width:39px;text-align:center;top:244.95px;font-size:18px;line-height:13px;letter-spacing:0;text-indent:0;color:#f4f4f4">4</div>
<div class="a" style="left:0;width:39px;text-align:center;top:272.1px;font-size:18px;line-height:13px;letter-spacing:0;text-indent:0;color:#f4f4f4">5</div>
<div class="a" style="left:0;width:39px;text-align:center;top:299.25px;font-size:18px;line-height:13px;letter-spacing:0;text-indent:0;color:#f4f4f4">6</div>
<div class="a" style="left:0;width:39px;text-align:center;top:326.4px;font-size:18px;line-height:13px;letter-spacing:0;text-indent:0;color:#f4f4f4">7</div>
<div class="a" style="left:0;width:39px;text-align:center;top:353.54999999999995px;font-size:18px;line-height:13px;letter-spacing:0;text-indent:0;color:#f4f4f4">8</div>
<div class="a" style="left:0;width:39px;text-align:center;top:380.7px;font-size:18px;line-height:13px;letter-spacing:0;text-indent:0;color:#f4f4f4">9</div>
<div class="a" style="left:0;width:39px;text-align:center;top:407.85px;font-size:18px;line-height:13px;letter-spacing:0.8px;text-indent:0.8px;color:#f4f4f4">10</div>
<div class="a" style="left:0;width:39px;text-align:center;top:435.0px;font-size:18px;line-height:13px;letter-spacing:0.8px;text-indent:0.8px;color:#f4f4f4">11</div>
<div class="a" style="left:0;width:39px;text-align:center;top:462.15px;font-size:18px;line-height:13px;letter-spacing:0.8px;text-indent:0.8px;color:#f4f4f4">12</div>
<div class="a" style="left:0;width:39px;text-align:center;top:489.29999999999995px;font-size:18px;line-height:13px;letter-spacing:0.8px;text-indent:0.8px;color:#f4f4f4">13</div>
<div class="a" style="left:0;width:39px;text-align:center;top:516.45px;font-size:18px;line-height:13px;letter-spacing:0.8px;text-indent:0.8px;color:#f4f4f4">14</div>
<div class="a" style="left:0;width:39px;text-align:center;top:543.5999999999999px;font-size:18px;line-height:13px;letter-spacing:0.8px;text-indent:0.8px;color:#f4f4f4">15</div>
<div class="a" style="left:0;width:39px;text-align:center;top:570.75px;font-size:18px;line-height:13px;letter-spacing:0.8px;text-indent:0.8px;color:#f4f4f4">16</div>
<div class="a" style="left:0;width:39px;text-align:center;top:597.9px;font-size:18px;line-height:13px;letter-spacing:0.8px;text-indent:0.8px;color:#f4f4f4">17</div>
<div class="a" style="left:0;width:39px;text-align:center;top:625.05px;font-size:18px;line-height:13px;letter-spacing:0.8px;text-indent:0.8px;color:#f4f4f4">18</div>
<div class="a" style="left:418px;top:234px;width:97px;height:30px;border:2px solid #1e7145"></div>
<div class="a" style="left:511px;top:260px;width:6px;height:6px;background:#1e7145;border:1px solid #fff;box-sizing:border-box"></div>
<div class="a" style="left:512px;top:261px;width:4px;height:4px;background:#1e7145"></div>
<div class="a" style="left:422px;top:243px;font-size:17.5px;line-height:17px;color:#3f6e80;letter-spacing:0px;-webkit-text-stroke:0.15px #3f6e80">200 Optimizer</div>
<div class="a" style="left:422px;top:257px;width:109px;height:1px;background:#8aa7b3"></div>
<div class="a" style="left:0;top:640px;width:984px;height:21px;background:#343434"></div>
<div class="a" style="left:0;top:640px;width:39px;height:1px;background:#262626"></div>
<div class="a" style="left:39px;top:640px;width:945px;height:1px;background:#8c8c8c"></div>
<div class="a" style="left:0;top:641px;width:984px;height:1px;background:#2c2c2c"></div>
<div class="a" style="left:0;top:642px;width:51px;height:18px;background:#2f2f2f"></div>
<svg style="left:12px;top:647px" width="8" height="11"><path d="M7 0.5 V10 L0.5 5.25 Z" fill="#5f5f5f"/></svg>
<svg style="left:31px;top:647px" width="8" height="11"><path d="M0.5 0.5 V10 L7 5.25 Z" fill="#5f5f5f"/></svg>
<div class="a" style="left:51px;top:640px;width:67px;height:19px;background:#fff;border-radius:0 0 3px 3px"></div>
<div class="a" style="left:51px;width:67px;text-align:center;top:647.5px;font-size:10.5px;line-height:9px;font-weight:bold;color:#2f8a57;letter-spacing:-0.2px">Sheet0</div>
<svg style="left:129px;top:646px" width="11" height="11"><path d="M5.5 0.5 V10.5 M0.5 5.5 H10.5" stroke="#d0d0d0" stroke-width="1.4"/></svg>
<div class="a" style="left:150px;top:642px;width:1px;height:16px;background:#4a4a4a"></div>
<div class="a" style="left:0;top:659px;width:984px;height:2px;background:#2a2a2a"></div>
<div class="a" style="left:984px;top:115px;width:296px;height:546px;background:#ffffff"></div>
<div class="a" style="left:984px;top:115px;width:296px;height:23px;background:#333333"></div>
<div class="a" style="left:998px;top:119.5px;font-size:14.5px;line-height:14.5px;letter-spacing:-0.74px;color:#ececec;-webkit-text-stroke:0.25px #ececec;-webkit-text-stroke:0.2px #ececec">CaseWare Cloud Connector</div>
<svg style="left:1254px;top:120px" width="14" height="14"><circle cx="7.3" cy="6.8" r="6.3" fill="#999999"/><path d="M4.8 4.3 L9.8 9.3 M9.8 4.3 L4.8 9.3" stroke="#333" stroke-width="1.25"/></svg>
<div class="a" style="left:995px;top:149px;font-size:14px;line-height:14px;letter-spacing:-0.83px;color:#7d8893;-webkit-text-stroke:0.25px #7d8893;-webkit-text-stroke:0.35px #7d8893">Trial Balance</div>
<div class="a" style="left:1087.5px;top:149px;font-size:14px;line-height:14px;letter-spacing:-0.54px;color:#7d8893;-webkit-text-stroke:0.25px #7d8893;-webkit-text-stroke:0.35px #7d8893">Properties</div>
<div class="a" style="left:1167.5px;top:149px;font-size:14px;line-height:14px;letter-spacing:-0.42px;color:#1b86c8;-webkit-text-stroke:0.25px #1b86c8;-webkit-text-stroke:0.35px #1b86c8">Hyperlink</div>
<div class="a" style="left:984px;top:172px;width:296px;height:1px;background:#dfe3e8"></div>
<div class="a" style="left:1157px;top:171.5px;width:76px;height:2.5px;background:#1b86c8"></div>
<div class="a" style="left:991px;top:182px;width:239px;height:34px;border:1px solid #d3d8de;border-radius:3px;background:#fff"></div>
<svg style="left:1004px;top:193.5px" width="12" height="12"><circle cx="4.6" cy="4.6" r="3.6" fill="none" stroke="#8f969d" stroke-width="1.3"/><path d="M7.3 7.3 L11 11" stroke="#8f969d" stroke-width="1.6"/></svg>
<div class="a" style="left:1025.5px;top:193.5px;font-size:11px;line-height:11px;letter-spacing:0px;color:#8e959c;-webkit-text-stroke:0.25px #8e959c;font-style:italic">Search for document</div>
<svg style="left:1243px;top:193px" width="17" height="12"><path d="M0.5 1 H16 M3.5 5.5 H13 M6.5 10 H10" stroke="#1b86c8" stroke-width="1.6"/></svg>
<div class="a" style="left:984px;top:225px;width:296px;height:28px;background:#eef0f3"></div>
<div class="a" style="left:984px;top:225px;width:296px;height:1px;background:#dde2e8"></div>
<svg style="left:988.5px;top:236.0px" width="9" height="6"><path d="M1 5 L4.5 1.3 L8 5" fill="none" stroke="#2f2f2f" stroke-width="1.5"/></svg>
<div class="a" style="left:1001.5px;top:232.5px;font-size:12px;line-height:12px;letter-spacing:-0.69px;color:#3a3a3a;font-weight:bold">Planning and Risk Assessment</div>
<div class="a" style="left:984px;top:252px;width:296px;height:28px;background:#eef0f3"></div>
<div class="a" style="left:984px;top:252px;width:296px;height:1px;background:#dde2e8"></div>
<svg style="left:1001px;top:263.1px" width="9" height="6"><path d="M1 5 L4.5 1.3 L8 5" fill="none" stroke="#2f2f2f" stroke-width="1.5"/></svg>
<div class="a" style="left:1014px;top:259.67px;font-size:12px;line-height:12px;letter-spacing:-0.5px;color:#3a3a3a;font-weight:bold">Client Acceptance</div>
<div class="a" style="left:984px;top:279px;width:296px;height:28px;background:#ffffff"></div>
<div class="a" style="left:984px;top:279px;width:296px;height:1px;background:#dde2e8"></div>
<svg style="left:1011.5px;top:286.2px" width="12" height="14"><rect x="0.6" y="0.6" width="10" height="12.4" rx="1.6" fill="none" stroke="#333333" stroke-width="1.2"/><path d="M2.2 4.7 H4.3 M2.2 7.7 H4.3" stroke="#333333" stroke-width="1"/><path d="M5.6 4.5 L6.6 5.3 L8.6 3.3 M5.6 7.5 L6.6 8.3 L8.6 6.3" fill="none" stroke="#333333" stroke-width="0.9"/></svg>
<div class="a" style="left:1029.3px;top:286.84px;font-size:12px;line-height:12px;letter-spacing:-0.23px;color:#3a3a3a;font-weight:bold">200 Optimizer</div>
<div class="a" style="left:984px;top:306px;width:296px;height:28px;background:#ffffff"></div>
<div class="a" style="left:984px;top:306px;width:296px;height:1px;background:#dde2e8"></div>
<svg style="left:1011.5px;top:314.8px" width="13" height="11"><rect x="0.6" y="0.6" width="11.6" height="9.4" rx="1.3" fill="none" stroke="#333333" stroke-width="1.2"/><path d="M1.2 1.6 L6.4 5.6 L11.6 1.6" fill="none" stroke="#333333" stroke-width="1.1"/></svg>
<div class="a" style="left:1029.3px;top:314.01px;font-size:12px;line-height:12px;letter-spacing:-0.4px;color:#3a3a3a;font-weight:bold">Letter</div>
<div class="a" style="left:984px;top:333px;width:296px;height:28px;background:#ffffff"></div>
<div class="a" style="left:984px;top:333px;width:296px;height:1px;background:#dde2e8"></div>
<svg style="left:1011.5px;top:341.9px" width="13" height="11"><rect x="0.6" y="0.6" width="11.6" height="9.4" rx="1.3" fill="none" stroke="#333333" stroke-width="1.2"/><path d="M1.2 1.6 L6.4 5.6 L11.6 1.6" fill="none" stroke="#333333" stroke-width="1.1"/></svg>
<div class="a" style="left:1029.3px;top:341.18px;font-size:12px;line-height:12px;letter-spacing:-0.4px;color:#3a3a3a;font-weight:bold">PA Letter</div>
<div class="a" style="left:984px;top:360px;width:296px;height:28px;background:#eef0f3"></div>
<div class="a" style="left:984px;top:360px;width:296px;height:1px;background:#dde2e8"></div>
<svg style="left:1001px;top:371.5px" width="9" height="6"><path d="M1 5 L4.5 1.3 L8 5" fill="none" stroke="#2f2f2f" stroke-width="1.5"/></svg>
<div class="a" style="left:1014px;top:368.35px;font-size:12px;line-height:12px;letter-spacing:-0.6px;color:#3a3a3a;font-weight:bold">General Inquiries and Analysis</div>
<div class="a" style="left:984px;top:388px;width:296px;height:28px;background:#ffffff"></div>
<div class="a" style="left:984px;top:388px;width:296px;height:1px;background:#dde2e8"></div>
<svg style="left:1011.5px;top:395.90000000000003px" width="12" height="13"><path d="M4.5 0.6 H1.8 C1.1 0.6 0.6 1.1 0.6 1.8 V10.8 C0.6 11.5 1.1 12 1.8 12 H9.8 C10.5 12 11 11.5 11 10.8 V1.8 C11 1.1 10.5 0.6 9.8 0.6 H7.1 L5.8 1.6 Z" fill="none" stroke="#333333" stroke-width="1.2"/><circle cx="5.8" cy="4.9" r="1.8" fill="#333333"/><path d="M2.7 9.8 C2.8 6.9 8.8 6.9 8.9 9.8 Z" fill="#333333" stroke="#333333" stroke-width="0.6"/></svg>
<div class="a" style="left:1029.3px;top:395.52px;font-size:12px;line-height:12px;letter-spacing:-0.4px;color:#3a3a3a;font-weight:bold">405 PBC Query</div>
<div class="a" style="left:984px;top:415px;width:296px;height:28px;background:#ffffff"></div>
<div class="a" style="left:984px;top:415px;width:296px;height:1px;background:#dde2e8"></div>
<svg style="left:999.3px;top:421.7px" width="12" height="14"><path d="M9.6 3 V11.2 C9.6 12 9.1 12.6 8.3 12.6 H2.5" fill="none" stroke="#333333" stroke-width="1.2"/><rect x="0.6" y="0.6" width="8" height="10.8" rx="1.2" fill="#fff" stroke="#333333" stroke-width="1.2"/><path d="M2.7 2.5 V4.2 M2.7 4.8 H4 M2.5 6.7 H6.5 M2.5 8.7 H6.5" stroke="#333333" stroke-width="0.9"/></svg>
<div class="a" style="left:1017px;top:422.69px;font-size:12px;line-height:12px;letter-spacing:-0.57px;color:#3a3a3a;font-weight:bold">Financial Statements</div>
<div class="a" style="left:984px;top:442px;width:296px;height:28px;background:#ffffff"></div>
<div class="a" style="left:984px;top:442px;width:296px;height:1px;background:#dde2e8"></div>
<svg style="left:999.3px;top:448.8px" width="12" height="14"><path d="M9.6 3 V11.2 C9.6 12 9.1 12.6 8.3 12.6 H2.5" fill="none" stroke="#333333" stroke-width="1.2"/><rect x="0.6" y="0.6" width="8" height="10.8" rx="1.2" fill="#fff" stroke="#333333" stroke-width="1.2"/><path d="M2.7 2.5 V4.2 M2.7 4.8 H4 M2.5 6.7 H6.5 M2.5 8.7 H6.5" stroke="#333333" stroke-width="0.9"/></svg>
<div class="a" style="left:1017px;top:449.86px;font-size:12px;line-height:12px;letter-spacing:-0.55px;color:#3a3a3a;font-weight:bold">CustomCalculation Financial Statements</div>
<div class="a" style="left:984px;top:469px;width:296px;height:28px;background:#ffffff"></div>
<div class="a" style="left:984px;top:469px;width:296px;height:1px;background:#dde2e8"></div>
<svg style="left:998.8px;top:476.5px" width="13" height="14"><path d="M8.4 2.6 V2 C8.4 1.2 7.8 0.6 7 0.6 H2 C1.2 0.6 0.6 1.2 0.6 2 V10.9 C0.6 11.7 1.2 12.3 2 12.3 H7 C7.8 12.3 8.4 11.7 8.4 10.9 V10.2" fill="none" stroke="#333333" stroke-width="1.2"/><text x="2.3" y="8.2" font-family="Liberation Serif" font-weight="bold" font-size="4.6" textLength="9" lengthAdjust="spacingAndGlyphs" fill="#333333" stroke="#333333" stroke-width="0.45">XLS</text></svg>
<div class="a" style="left:1017px;top:477.03px;font-size:12px;line-height:12px;letter-spacing:-0.5px;color:#3a3a3a;font-weight:bold">Excel document</div>
<div class="a" style="left:984px;top:496px;width:296px;height:28px;background:#ffffff"></div>
<div class="a" style="left:984px;top:496px;width:296px;height:1px;background:#dde2e8"></div>
<svg style="left:999px;top:504.5px" width="13" height="11"><rect x="0.6" y="0.6" width="11.6" height="9.4" rx="1.3" fill="none" stroke="#333333" stroke-width="1.2"/><path d="M1.2 1.6 L6.4 5.6 L11.6 1.6" fill="none" stroke="#333333" stroke-width="1.1"/></svg>
<div class="a" style="left:1017px;top:504.2px;font-size:12px;line-height:12px;letter-spacing:-0.5px;color:#3a3a3a;font-weight:bold">Letter Letter</div>
<div class="a" style="left:984px;top:523px;width:296px;height:28px;background:#ffffff"></div>
<div class="a" style="left:984px;top:523px;width:296px;height:1px;background:#dde2e8"></div>
<svg style="left:998px;top:533.6px" width="14" height="8"><path d="M5.6 0.8 H3.6 C2 0.8 0.8 2 0.8 3.5 C0.8 5 2 6.2 3.6 6.2 H5.6 M7.6 0.8 H9.6 C11.2 0.8 12.4 2 12.4 3.5 C12.4 5 11.2 6.2 9.6 6.2 H7.6" fill="none" stroke="#333333" stroke-width="1.4"/><path d="M4.4 3.5 H8.8" stroke="#333333" stroke-width="1.3"/></svg>
<div class="a" style="left:1017px;top:531.37px;font-size:12px;line-height:12px;letter-spacing:-0.4px;color:#3a3a3a;font-weight:bold">Link</div>
<div class="a" style="left:984px;top:550px;width:296px;height:28px;background:#ffffff"></div>
<div class="a" style="left:984px;top:550px;width:296px;height:1px;background:#dde2e8"></div>
<svg style="left:998.8px;top:558.5px" width="12" height="13"><path d="M4.5 0.6 H1.8 C1.1 0.6 0.6 1.1 0.6 1.8 V10.8 C0.6 11.5 1.1 12 1.8 12 H9.8 C10.5 12 11 11.5 11 10.8 V1.8 C11 1.1 10.5 0.6 9.8 0.6 H7.1 L5.8 1.6 Z" fill="none" stroke="#333333" stroke-width="1.2"/><circle cx="5.8" cy="4.9" r="1.8" fill="#333333"/><path d="M2.7 9.8 C2.8 6.9 8.8 6.9 8.9 9.8 Z" fill="#333333" stroke="#333333" stroke-width="0.6"/></svg>
<div class="a" style="left:1017px;top:558.54px;font-size:12px;line-height:12px;letter-spacing:-0.5px;color:#3a3a3a;font-weight:bold">Query</div>
<div class="a" style="left:984px;top:577px;width:296px;height:28px;background:#ffffff"></div>
<div class="a" style="left:984px;top:577px;width:296px;height:1px;background:#dde2e8"></div>
<svg style="left:998.8px;top:584.9px" width="13" height="14"><path d="M8.4 2.6 V2 C8.4 1.2 7.8 0.6 7 0.6 H2 C1.2 0.6 0.6 1.2 0.6 2 V10.9 C0.6 11.7 1.2 12.3 2 12.3 H7 C7.8 12.3 8.4 11.7 8.4 10.9 V10.2" fill="none" stroke="#333333" stroke-width="1.2"/><text x="2.3" y="8.2" font-family="Liberation Serif" font-weight="bold" font-size="4.6" textLength="9" lengthAdjust="spacingAndGlyphs" fill="#333333" stroke="#333333" stroke-width="0.45">XLS</text></svg>
<div class="a" style="left:1017px;top:585.71px;font-size:12px;line-height:12px;letter-spacing:-0.5px;color:#3a3a3a;font-weight:bold">test Excel document</div>
<div class="a" style="left:984px;top:604px;width:296px;height:28px;background:#ffffff"></div>
<div class="a" style="left:984px;top:604px;width:296px;height:1px;background:#dde2e8"></div>
<svg style="left:998.8px;top:612.0px" width="13" height="14"><path d="M8.4 2.6 V2 C8.4 1.2 7.8 0.6 7 0.6 H2 C1.2 0.6 0.6 1.2 0.6 2 V10.9 C0.6 11.7 1.2 12.3 2 12.3 H7 C7.8 12.3 8.4 11.7 8.4 10.9 V10.2" fill="none" stroke="#333333" stroke-width="1.2"/><text x="2.3" y="8.2" font-family="Liberation Serif" font-weight="bold" font-size="4.6" textLength="9" lengthAdjust="spacingAndGlyphs" fill="#333333" stroke="#333333" stroke-width="0.45">DOC</text></svg>
<div class="a" style="left:1017px;top:612.88px;font-size:12px;line-height:12px;letter-spacing:-0.5px;color:#3a3a3a;font-weight:bold">Word document</div>
<div class="a" style="left:984px;top:647px;width:296px;height:14px;background:linear-gradient(rgba(255,255,255,0),#f7f7f7)"></div>
<div class="a" style="left:983px;top:115px;width:1px;height:546px;background:rgba(0,0,0,0.58)"></div>
<div class="a" style="left:984px;top:138px;width:1px;height:523px;background:rgba(0,0,0,0.22)"></div>
</body></html>
